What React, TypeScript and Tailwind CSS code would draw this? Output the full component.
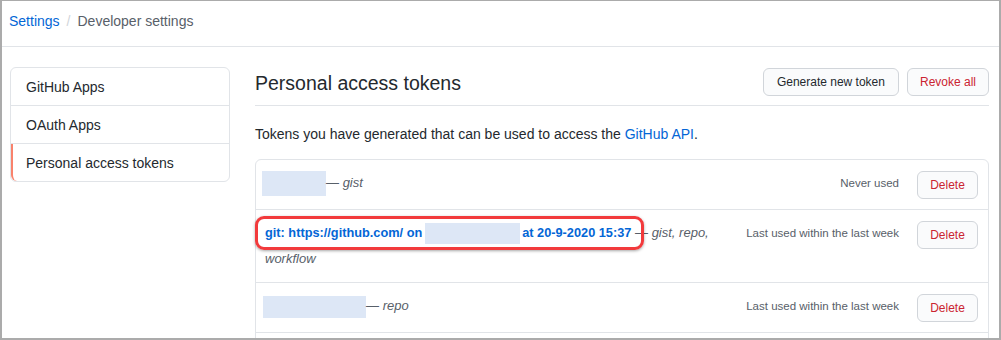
const font = { fontFamily: '"Liberation Sans", Arial, sans-serif' };

const DeleteButton = () => (
  <button className="mt-[1px] ml-[18px] h-[28px] w-[61px] shrink-0 rounded-[6px] border border-[#d1d5da] bg-[#fafbfc] text-[12px] text-[#cb2431]">
    Delete
  </button>
);

const Redacted = ({ w, h, className = "" }: { w: string; h: string; className?: string }) => (
  <span className={`inline-block align-middle bg-[#dde7f6] ${w} ${h} ${className}`}></span>
);

export default function App() {
  return (
    <div
      style={font}
      className="w-[1001px] h-[340px] overflow-hidden bg-white border-t border-l-2 border-r-2 border-b-2 border-[#ababab] text-[#24292e]"
    >
      {/* breadcrumb */}
      <div className="h-[46px] border-b border-[#e1e4e8] flex items-start pt-[10px] pl-[7px] text-[14px] leading-[20px]">
        <a className="text-[#0366d6]">Settings</a>
        <span className="mx-[7px] text-[#d1d5da]">/</span>
        <span className="text-[#586069]">Developer settings</span>
      </div>

      <div className="flex pt-[20px] pl-[8px] pr-[10px]">
        {/* sidebar */}
        <nav className="w-[220px] shrink-0 self-start rounded-[6px] border border-[#e1e4e8] text-[14px]">
          <div className="h-[38px] flex items-center pt-[2px] pl-[15px] border-b border-[#e1e4e8]">GitHub Apps</div>
          <div className="h-[38px] flex items-center pt-[2px] pl-[15px] border-b border-[#e1e4e8]">OAuth Apps</div>
          <div className="h-[37px] flex items-center pt-[2px] pl-[13px] border-l-2 border-[#f9826c] rounded-bl-[6px]">
            Personal access tokens
          </div>
        </nav>

        {/* main */}
        <main className="ml-[25px] flex-1">
          <div className="flex items-center justify-between h-[39px] pt-[1px] pb-[9px] border-b border-[#e1e4e8]">
            <h2 className="text-[19.5px] font-normal leading-[26px] pt-[2px]">Personal access tokens</h2>
            <div className="flex gap-[8px]">
              <button className="h-[28px] px-[13px] rounded-[6px] border border-[#d1d5da] bg-[#fafbfc] text-[12px] font-medium text-[#24292e]">
                Generate new token
              </button>
              <button className="h-[28px] px-[12px] rounded-[6px] border border-[#d1d5da] bg-[#fafbfc] text-[12px] font-medium text-[#cb2431]">
                Revoke all
              </button>
            </div>
          </div>

          <p className="mt-[18px] text-[14px] leading-[21px]">
            Tokens you have generated that can be used to access the{" "}
            <a className="text-[#0366d6]">GitHub API</a>.
          </p>

          <div className="mt-[14px] rounded-[6px] border border-[#e1e4e8]">
            {/* row 1 */}
            <div className="flex items-start py-[10px] pl-[9px] pr-[10px] border-b border-[#e1e4e8]">
              <div className="flex-1 min-w-0 text-[13px] leading-[26px]">
                <Redacted w="w-[64px]" h="h-[25px]" className="-ml-[3px]" />
                <span className="text-[#586069]">
                  — <em>gist</em>
                </span>
              </div>
              <div className="ml-[16px] text-[11.5px] leading-[26px] text-[#586069] whitespace-nowrap">Never used</div>
              <DeleteButton />
            </div>

            {/* row 2 */}
            <div className="flex items-start py-[10px] pl-[9px] pr-[10px] border-b border-[#e1e4e8]">
              <div className="relative flex-1 min-w-0 text-[13px] leading-[26px]">
                <span className="font-bold text-[12.75px] text-[#0366d6]">
                  git: https://github.com/ on
                  <Redacted w="w-[95px]" h="h-[21px]" className="ml-[3px] mr-[2px]" />
                  at 20-9-2020 15:37
                </span>
                <span className="text-[#586069]">
                  {" "}— <em>gist, repo, workflow</em>
                </span>
                <span className="absolute left-[-10px] top-[-4px] w-[389px] h-[34px] rounded-[9px] border-[3px] border-[#f23a3c] shadow-[0_1px_3px_rgba(0,0,0,0.35)]"></span>
              </div>
              <div className="ml-[16px] text-[11.5px] leading-[26px] text-[#586069] whitespace-nowrap">
                Last used within the last week
              </div>
              <DeleteButton />
            </div>

            {/* row 3 */}
            <div className="flex items-start py-[10px] pl-[9px] pr-[10px] border-b border-[#e1e4e8]">
              <div className="flex-1 min-w-0 text-[13px] leading-[26px]">
                <Redacted w="w-[103px]" h="h-[22px]" className="-ml-[2px]" />
                <span className="text-[#586069]">
                  — <em>repo</em>
                </span>
              </div>
              <div className="ml-[16px] text-[11.5px] leading-[26px] text-[#586069] whitespace-nowrap">
                Last used within the last week
              </div>
              <DeleteButton />
            </div>

            {/* row 4, cut off */}
            <div className="h-[50px]"></div>
          </div>
        </main>
      </div>
    </div>
  );
}
